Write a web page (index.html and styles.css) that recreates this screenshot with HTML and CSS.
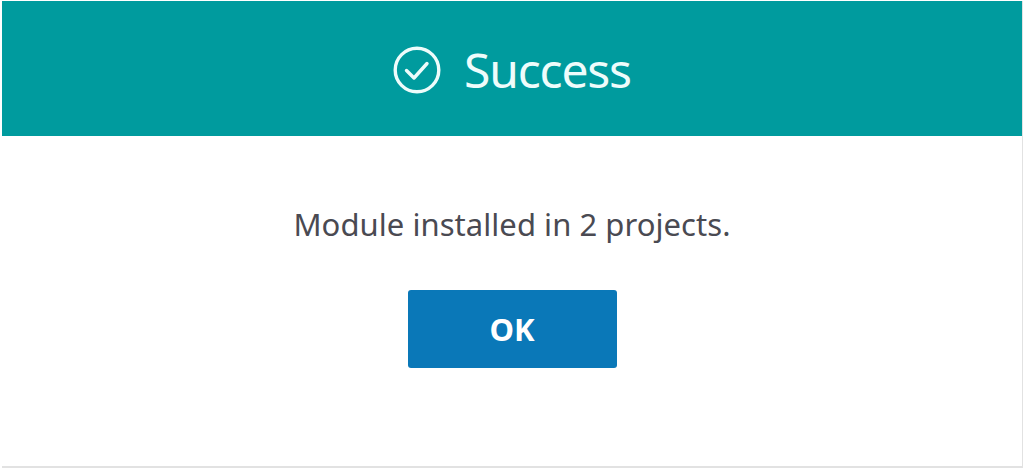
FILE: index.html
```html
<!DOCTYPE html>
<html lang="en">
<head>
    <meta charset="UTF-8">
    <title>Success</title>
    <link rel="stylesheet" href="styles.css">
</head>
<body>

<div class="dialog">
    <div class="dialog-header">
        <svg class="check-icon" viewBox="0 0 48 48" width="48" height="48" fill="none" stroke="currentColor" stroke-width="3.4" stroke-linecap="round" stroke-linejoin="round">
            <circle cx="24" cy="24" r="21.8"/>
            <path d="M13.5 24.5l7.5 7.5L34 17.5"/>
        </svg>
        <span class="dialog-title">Success</span>
    </div>
    <div class="dialog-body">
        <p class="message">Module installed in 2 projects.</p>
        <button class="btn-ok">OK</button>
    </div>
</div>

</body>
</html>
```

FILE: styles.css
```css
html, body { height: 100%; }
body { margin: 0; padding: 1px 1px 3px 2px; box-sizing: border-box; background: #fff; font-family: "Noto Sans", Arial, sans-serif; }
.dialog { height: 100%; display: flex; flex-direction: column; box-sizing: border-box; background: #fff; border-right: 1px solid #e2e2e2; border-bottom: 2px solid #e2e2e2; }
.dialog-header { height: 135px; box-sizing: border-box; padding-top: 2px; display: flex; align-items: center; justify-content: center; gap: 23px; background: #009b9e; color: #eefcfb; }
.check-icon { display: block; }
.dialog-title { font-family: "Noto Sans", sans-serif; font-size: 48px; font-weight: 400; letter-spacing: -1.2px; line-height: 1; }
.dialog-body { flex: 1; display: flex; flex-direction: column; align-items: center; }
.message { margin: 68px 0 0; font-size: 31px; letter-spacing: 0.05px; line-height: 40px; color: #4a4a52; }
.btn-ok { width: 209px; height: 78px; margin-top: 46px; border: none; border-radius: 3px; background: #0a78b8; color: #fff; font-family: "Noto Sans", Arial, sans-serif; font-size: 31px; font-weight: 700; cursor: pointer; }
```
